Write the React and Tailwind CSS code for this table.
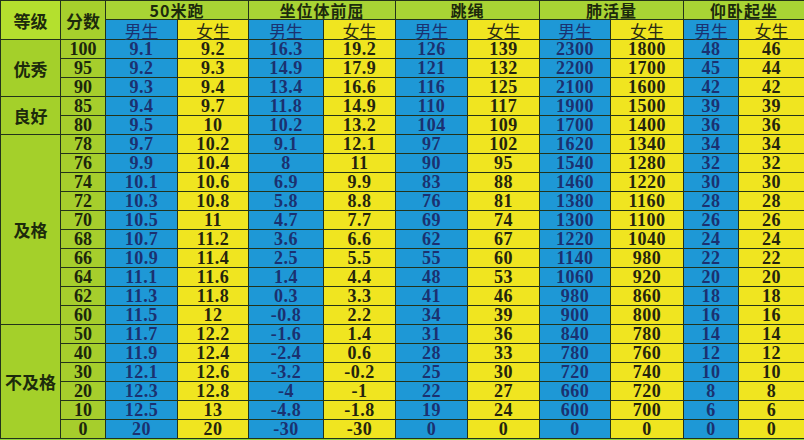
const GROUPS = ["50米跑", "坐位体前屈", "跳绳", "肺活量", "仰卧起坐"];

const COLS = [
  "w-[60px]", "w-[45px]", "w-[72px]", "w-[71px]", "w-[75px]", "w-[72px]",
  "w-[72px]", "w-[72px]", "w-[71px]", "w-[73px]", "w-[55px]", "w-[66px]",
];

// 分数, then 男/女 pairs for each event
const ROWS = [
  ["100", "9.1", "9.2", "16.3", "19.2", "126", "139", "2300", "1800", "48", "46"],
  ["95", "9.2", "9.3", "14.9", "17.9", "121", "132", "2200", "1700", "45", "44"],
  ["90", "9.3", "9.4", "13.4", "16.6", "116", "125", "2100", "1600", "42", "42"],
  ["85", "9.4", "9.7", "11.8", "14.9", "110", "117", "1900", "1500", "39", "39"],
  ["80", "9.5", "10", "10.2", "13.2", "104", "109", "1700", "1400", "36", "36"],
  ["78", "9.7", "10.2", "9.1", "12.1", "97", "102", "1620", "1340", "34", "34"],
  ["76", "9.9", "10.4", "8", "11", "90", "95", "1540", "1280", "32", "32"],
  ["74", "10.1", "10.6", "6.9", "9.9", "83", "88", "1460", "1220", "30", "30"],
  ["72", "10.3", "10.8", "5.8", "8.8", "76", "81", "1380", "1160", "28", "28"],
  ["70", "10.5", "11", "4.7", "7.7", "69", "74", "1300", "1100", "26", "26"],
  ["68", "10.7", "11.2", "3.6", "6.6", "62", "67", "1220", "1040", "24", "24"],
  ["66", "10.9", "11.4", "2.5", "5.5", "55", "60", "1140", "980", "22", "22"],
  ["64", "11.1", "11.6", "1.4", "4.4", "48", "53", "1060", "920", "20", "20"],
  ["62", "11.3", "11.8", "0.3", "3.3", "41", "46", "980", "860", "18", "18"],
  ["60", "11.5", "12", "-0.8", "2.2", "34", "39", "900", "800", "16", "16"],
  ["50", "11.7", "12.2", "-1.6", "1.4", "31", "36", "840", "780", "14", "14"],
  ["40", "11.9", "12.4", "-2.4", "0.6", "28", "33", "780", "760", "12", "12"],
  ["30", "12.1", "12.6", "-3.2", "-0.2", "25", "30", "720", "740", "10", "10"],
  ["20", "12.3", "12.8", "-4", "-1", "22", "27", "660", "720", "8", "8"],
  ["10", "12.5", "13", "-4.8", "-1.8", "19", "24", "600", "700", "6", "6"],
  ["0", "20", "20", "-30", "-30", "0", "0", "0", "0", "0", "0"],
];

// level label at the first row of each group: [label, rowSpan]
const LEVELS = { 0: ["优秀", 3], 3: ["良好", 2], 5: ["及格", 10], 15: ["不及格", 6] };

const cjk = "font-['Noto_Sans_CJK_SC','Noto_Sans',sans-serif]";
const num = "font-['Liberation_Serif','DejaVu_Serif',serif]";
const cell = "border border-[#23331a] p-0 leading-none text-center";

export default function App() {
  return (
    <div className="w-[804px] h-[440px] overflow-hidden bg-[#8fd43a]">
      <table className="table-fixed border-collapse w-[804px]">
        <colgroup>
          {COLS.map((w, i) => (
            <col key={i} className={w} />
          ))}
        </colgroup>
        <thead>
          <tr className="h-[19px]">
            <th rowSpan={2} className={`${cell} ${cjk} bg-[#b4e02e] text-[17px] font-bold text-[#1c2a0c]`}>
              等级
            </th>
            <th rowSpan={2} className={`${cell} ${cjk} bg-[#a6d02c] text-[17px] font-bold text-[#1c2a0c]`}>
              分数
            </th>
            {GROUPS.map((g) => (
              <th
                key={g}
                colSpan={2}
                className={`${cell} ${cjk} bg-[#a8d434] text-[16px] font-bold text-[#1c2a0c] tracking-[1px]`}
              >
                {g}
              </th>
            ))}
          </tr>
          <tr className="h-[20px]">
            {GROUPS.map((g) => [
              <th key={g + "m"} className={`${cell} ${cjk} bg-[#1e98d6] text-[17px] font-normal text-[#1b3170] pt-px`}>
                男生
              </th>,
              <th key={g + "f"} className={`${cell} ${cjk} bg-[#f0e520] text-[17px] font-normal text-[#2a2a14] pt-px`}>
                女生
              </th>,
            ])}
          </tr>
        </thead>
        <tbody>
          {ROWS.map((row, r) => (
            <tr key={r} className="h-[19px]">
              {LEVELS[r] && (
                <td
                  rowSpan={LEVELS[r][1]}
                  className={`${cell} ${cjk} bg-[#a4d02a] text-[17px] font-bold text-[#1c2a0c]`}
                >
                  {LEVELS[r][0]}
                </td>
              )}
              <td className={`${cell} ${num} bg-[#a6ce2c] text-[18px] font-bold text-[#1c260c]`}>
                {row[0]}
              </td>
              {row.slice(1).map((v, i) => (
                <td
                  key={i}
                  className={`${cell} ${num} text-[18px] font-bold tracking-[0.5px] ${
                    i % 2 === 0 ? "bg-[#1e98d6] text-[#1b3170]" : "bg-[#f0e520] text-[#24240e]"
                  }`}
                >
                  {v}
                </td>
              ))}
            </tr>
          ))}
        </tbody>
      </table>
    </div>
  );
}
